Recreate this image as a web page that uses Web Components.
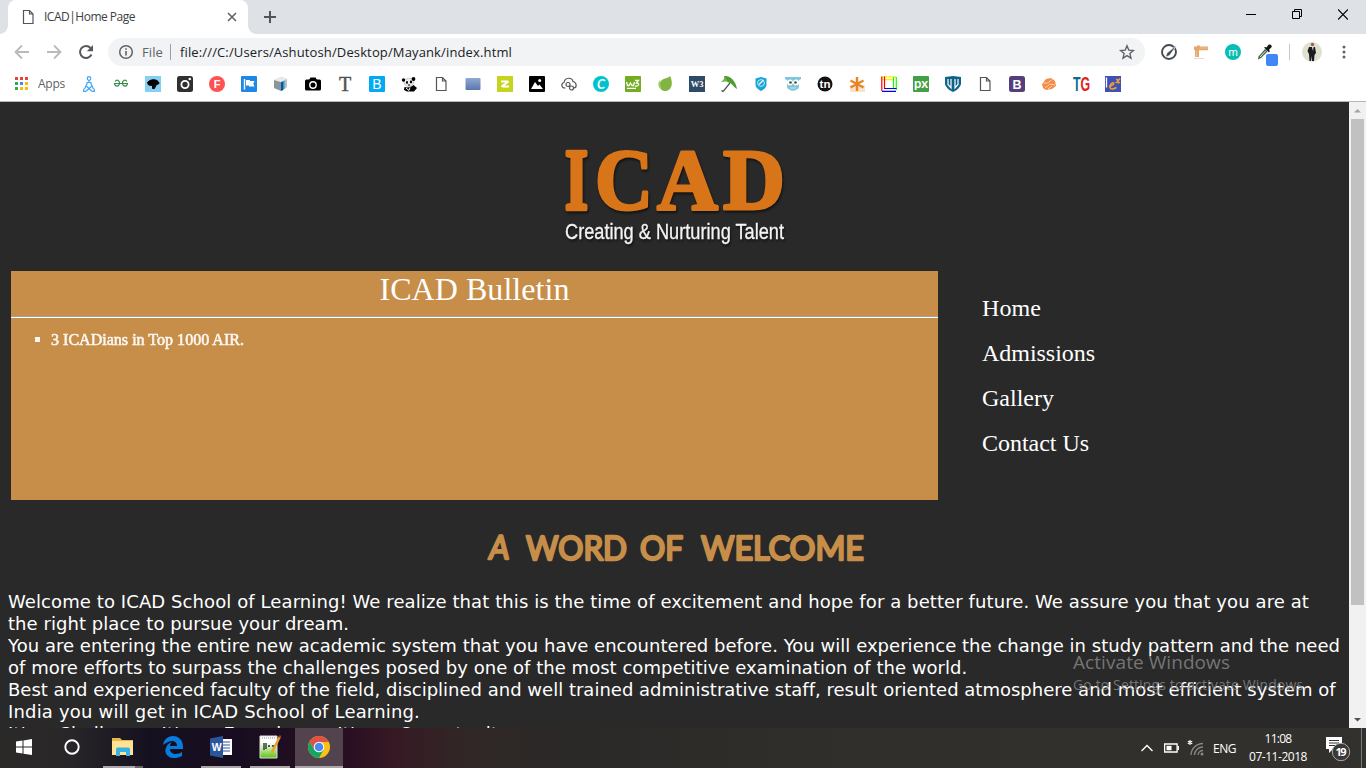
<!DOCTYPE html>
<html lang="en">
<head>
<meta charset="utf-8">
<title>ICAD|Home Page</title>
<style>
html,body{margin:0;height:100%;overflow:hidden}
</style>
</head>
<body>
<desktop-screen></desktop-screen>
<script>
const define = (name, html, setup) => {
  const t = document.createElement('template');
  t.innerHTML = html;
  customElements.define(name, class extends HTMLElement {
    connectedCallback() {
      if (this.shadowRoot) return;
      this.attachShadow({ mode: 'open' }).append(t.content.cloneNode(true));
      if (setup) setup(this, this.shadowRoot);
    }
  });
};

/* One line of text whose tracking is set so that it fills the given width */
define('fit-line', `<style>
:host{display:block;white-space:nowrap}
span{display:inline-block;white-space:nowrap}
</style><span></span>`, (host, root) => {
  const s = root.querySelector('span');
  s.textContent = host.getAttribute('text');
  const w = +host.getAttribute('width');
  if (w) {
    const natural = s.getBoundingClientRect().width;
    s.style.letterSpacing = ((w - natural) / s.textContent.length) + 'px';
  }
});

const page = '<path d="M3.500 1.500h6l3.500 3.500v9.500h-9.500zM9.500 1.500v3.500h3.500" fill="none" stroke="#555" stroke-width="1.200"/>';
const glyphs = {
  page,
  person: '<circle cx="8" cy="2.500" r="1.800"/><path d="M8 4v2M5.500 6.500h5M6.500 6.500L3.500 13M9.500 6.500L12.500 13M4.500 9.500L11 15.300M11.500 9.500L5 15.300M5 15.300H2.700V12.700M11 15.300h2.300V12.700"/>',
  gfg: '<g fill="none" stroke="#2f8d46" stroke-width="1.200"><path d="M2 5.500C4 3 7 4.500 6.500 7.500 6 11 2 11 1.500 7.500H14.500C14 11 10 11 9.500 7.500 9 4.500 12 3 14 5.500"/></g>',
  bird: '<rect width="16" height="16" fill="#87cff0"/><path d="M2.500 6.500c1.500-2 5-3.500 8-2.500 2 .5 3.500 2 3.500 3.500l-3 1.500-1.500 3.500H7.500V9.500L3.500 9z" stroke="#000"/>',
  insta: '<rect width="16" height="16" rx="2.500" fill="#303030"/><circle cx="8" cy="8.500" r="3.600" fill="none" stroke="#fff" stroke-width="1.800"/><circle cx="12.800" cy="3" r="1.300" fill="#fff"/>',
  F: '<circle cx="8" cy="8" r="8" fill="#ff5252"/><text x="8" y="12" font-size="11" font-weight="700" fill="#fff" text-anchor="middle">F</text>',
  flag: '<rect width="16" height="16" rx="1" fill="#1e88e5"/><path d="M3.500 3v10.500" stroke="#fff" stroke-width="1.400"/><path d="M5 4h4v1h4.500l-1.200 2.700 1.200 2.800H8v-1H5z" fill="#fff"/>',
  box: '<path d="M1 4l7-3 6 2v8l-5 4-8-3z" fill="#b9c0c6"/><path d="M1 4l7 2v9l-7-3z" fill="#8d959c"/><path d="M8 6l2-.8V14l-2 1z" fill="#075893"/><path d="M10 5l1.500-.6v8L10 14z" fill="#2e95d3"/><path d="M1 4l7-3 6 2-6 3z" fill="#e7eaec"/>',
  camera: '<rect y="3.500" width="16" height="11" rx="1.500"/><path d="M4 4l1.500-2.500h5L12 4z"/><circle cx="8" cy="9" r="3.200" fill="none" stroke="#fff" stroke-width="1.400"/>',
  T: '<text x="8" y="14.500" font-size="20" text-anchor="middle" fill="#505050" stroke="#505050" stroke-width=".4" font-family="Liberation Serif,serif">T</text>',
  B: '<rect width="16" height="16" rx="1" fill="#03a9f4"/><text x="8" y="13" font-size="14" text-anchor="middle" fill="#fff">B</text>',
  panda: '<path d="M3 5c3-4 9-3.500 10 1 0 5-9 6-10 1z" fill="#eee" stroke="#999" stroke-width=".5"/><circle cx="2.500" cy="4" r="1.700"/><circle cx="12.500" cy="3" r="1.900"/><ellipse cx="6" cy="6.500" rx="1" ry="1.400"/><ellipse cx="10" cy="6" rx="1.200" ry="1.400"/><path d="M3.500 11c3 1 7 0 9-2l3.500 3-3 3.500H6L3 14zM7 8.500h2v1H7z"/><path d="M5 12l3 2.500 1-3" stroke="#fff" fill="none"/>',
  blue: '<defs><linearGradient id="b" x2="0" y2="1"><stop stop-color="#91a9d3"/><stop offset="1" stop-color="#5b76ac"/></linearGradient></defs><rect x=".5" y="2" width="15" height="12" rx="1" fill="url(#b)"/>',
  Z: '<rect width="16" height="16" fill="#c6d420"/><path d="M4 5.500h6.500q1 0 0 .8L5.500 9.700q-1 .8 0 .8H12" fill="none" stroke="#fff" stroke-width="1.800"/>',
  mount: '<rect width="16" height="16" rx="1"/><path d="M2 13l4-7 3 4 1.500-1.500L14 13z" fill="#fff"/><circle cx="10.700" cy="4.500" r="1.500" fill="#fff"/>',
  cloud: '<g fill="none" stroke="#555" stroke-width="1.200"><path d="M4.500 12H4C0 12 0 7 3 6.500 4 1 11 1 12 5.500c4 1 4 6 1 6.500"/><circle cx="7" cy="8.500" r="2"/><circle cx="10.500" cy="12" r="2"/></g>',
  C: '<circle cx="8" cy="8" r="8" fill="#00c4cc"/><text x="8" y="12.500" font-size="13" font-style="italic" font-weight="700" text-anchor="middle" fill="#fff" font-family="Lato">C</text>',
  w3s: '<rect width="16" height="16" rx="1" fill="#73ad21"/><path d="M1.500 6l1 3.500h1.500L5.500 7 7 9.500h1.500L9.500 6M10 4.500h3.500l-2 2.500c3.500 0 2.500 4-1.500 3M2 12.300h9" fill="none" stroke="#fff" stroke-width="1.300"/>',
  leaf: '<path d="M13 0c-1 2-7 2-9 5-3 4-1 10 4 10 8 0 8-10 5-15z" fill="#80b541"/><path d="M2.500 12C0 8 2 5 3.500 4c-1 4 0 8 2 10.500z" fill="#a4cf63"/>',
  W3: '<rect width="16" height="16" fill="#2f4a68"/><text x="8" y="11" font-size="8.500" font-weight="700" text-anchor="middle" fill="#fff" font-family="Liberation Serif">W3</text>',
  umb: '<path d="M3 0C9-1 15 5 16 13 12.500 11 11 7 7.500 6.500 6 5 3 5 0 6 3 4 4 2 3 0z" fill="#4e9d30"/><path d="M3 0c1 3 0 5-3 6 3-1 5.500-1 7.500.5z" fill="#74b848"/><path d="M9 7l-6.500 8c-1 1-2 0-1.200-1" fill="none" stroke="#555" stroke-width="1.200"/>',
  shield: '<path d="M2.500 2.500L8 1l5.500 1.500v6c0 4-5.500 6.500-5.500 6.500s-5.500-2.500-5.500-6.500z" fill="#1aa3d5"/><circle cx="8" cy="7" r="3.400" fill="none" stroke="#b9e8fa"/><path d="M6 8.500L10.500 4" stroke="#dff6ff" stroke-width="1.500"/>',
  owl: '<path d="M0 1h16v2l-2 1v7c-2 5-10 5-12 0V4L0 3z" fill="#7fc5df"/><circle cx="5" cy="6.500" r="3" fill="#fff"/><circle cx="11" cy="6.500" r="3" fill="#fff"/><circle cx="5.500" cy="6.500" r="1.300" fill="#355"/><circle cx="10.500" cy="6.500" r="1.300" fill="#355"/><path d="M7 8h2l-1 2z" fill="#f2a33a"/><path d="M5 12h6" stroke="#bde8f5"/>',
  tn: '<circle cx="8" cy="8" r="7.500" fill="#111"/><text x="8" y="11.500" font-size="11.500" font-weight="700" text-anchor="middle" fill="#fff">tn</text>',
  star: '<rect x="1" y="9" width="15" height="7" fill="#fbe3ca"/><path d="M8 1v14M1.500 4.500l13 7M14.500 4.500l-13 7" stroke="#e78425" stroke-width="2.400"/>',
  frame: '<path d="M1 .8h14M1 3.700h11" stroke="#fe0" stroke-width="1.200"/><path d="M.8.5V15M3.500.5V13" stroke="red" stroke-width="1.200"/><path d="M12.500 1v12M15.300 1v13" stroke="#1f0" stroke-width="1.200"/><path d="M3.500 12.500h12M1 15.300h14" stroke="#00f" stroke-width="1.200"/>',
  px: '<rect width="16" height="16" rx="1" fill="#43a047"/><text x="8" y="11.500" font-size="13" font-weight="700" text-anchor="middle" fill="#fff" font-family="Lato">px</text>',
  ws: '<path d="M0 1l8-1 8 1v7c-1 5-8 8-8 8S1 13 0 8z" fill="#0d6487"/><path d="M3 3v5.500l3 3.500V3M13 3v5.500l-3 3.500V3" fill="none" stroke="#fff" stroke-width="1.200"/>',
  boot: '<rect width="16" height="16" rx="2.500" fill="#563d7c"/><text x="8" y="12.500" font-size="12.500" font-weight="700" text-anchor="middle" fill="#fff">B</text>',
  hands: '<path d="M1 8L5 3l5-1 4 3 1 5-4 3-6 1-3-2z" fill="#f58b45"/><path d="M1.500 7h5l4-3M4 12l5-4 5 1M7 13l4-3" fill="none" stroke="#ffd1b0" stroke-width="1"/>',
  TG: '<g transform="scale(.62 1)"><text x="0" y="15" font-weight="700" font-size="20"><tspan fill="#0e6a8c">T</tspan><tspan fill="#e2231a">G</tspan></text></g>',
  lex: '<rect width="16" height="16" fill="#3f51b5"/><path d="M1.500 1.500v10" stroke="#fff" stroke-width="1.300"/><path d="M4 10.500c7-2 5-5 2.500-3-3 3-2 8 5 4M11 3.500q2-.5 2 2t2 .5M15 2.500l-4 4.500" fill="none" stroke="#f5a02c" stroke-width="1.500"/>',
  back: '<path d="M15 8H2M8 1.500L1.500 8 8 14.500" fill="none" stroke="#b8babd" stroke-width="1.800"/>',
  forward: '<path d="M1 8h13M8 1.500L14.500 8 8 14.500" fill="none" stroke="#b8babd" stroke-width="1.800"/>',
  reload: '<path d="M13.500 10.500A6 6 0 1 1 12.500 4" fill="none" stroke="#55595e" stroke-width="2"/><path d="M15 1v6.200H8.800z" fill="#55595e"/>',
  info: '<circle cx="8" cy="8" r="6.300" fill="none" stroke="#5f6368" stroke-width="1.500"/><path d="M8 7v4.500M8 4.300v1.500" stroke="#5f6368" stroke-width="1.600"/>',
  fav: '<path d="M8 1.800l1.800 4.300 4.600.4-3.500 3.100 1.100 4.600L8 11.700l-4 2.500 1.100-4.600L1.600 6.500l4.600-.4z" fill="none" stroke="#5f6368" stroke-width="1.400"/>',
  edit: '<circle cx="8" cy="8" r="7" fill="none" stroke="#444b50" stroke-width="1.900"/><path d="M16 1L8.500 11.500l-4 1.500L6 9z" fill="#444b50" stroke="#fff" stroke-width=".6"/>',
  tcross: '<path d="M1 2.500h3v-1h3v1h8v3.800H6V13H2V6H1z" fill="#e5a56c"/><path d="M6.500 4h8M3.500 7v6" stroke="#f6c08a"/><path d="M1 14.500h10" stroke="#ddd"/>',
  m: '<circle cx="8" cy="8" r="8" fill="#08bdb4"/><text x="8" y="11.500" font-size="11.500" text-anchor="middle" fill="#fff">m</text>',
  drop: '<path d="M1 15.500l.5-3L8 5l2.500 2.500L4 14z" fill="#3f6848"/><path d="M3 13l5.500-6" stroke="#d6e9d8"/><path d="M7 3.500l5 5 .8-1.500-.8-1.200 2.500-2.500c1-2-1.500-3.500-3-2.500L9.500 3.500 8.500 3z" fill="#171717"/>'
};
define('ui-icon', `<style>:host{display:block;width:16px;height:16px;flex:none}svg{display:block;width:100%;height:100%;overflow:visible;font-family:"Liberation Sans",sans-serif}</style><svg viewBox="0 0 16 16"></svg>`, (host, root) => {
  const n = host.getAttribute('name'), s = root.querySelector('svg');
  s.innerHTML = glyphs[n];
  if (n === 'person') { s.setAttribute('fill', 'none'); s.setAttribute('stroke', '#42a5f5'); s.setAttribute('stroke-width', '1.2'); }
});

define('tab-strip', `<style>
:host{display:flex;height:34px;background:#dee1e6;align-items:stretch;font:12px "Open Sans",sans-serif;color:#3c4043;padding-left:8px;box-sizing:border-box}
.tab{width:240px;box-sizing:border-box;background:#fff;border-radius:8px 8px 0 0;display:flex;align-items:center;padding:0 10px 0 12px;position:relative}
.tab::before,.tab::after{content:"";position:absolute;bottom:0;width:8px;height:8px}
.tab::before{left:-8px;background:radial-gradient(circle at 0 0,#dee1e6 7.500px,#fff 8px)}
.tab::after{right:-8px;background:radial-gradient(circle at 100% 0,#dee1e6 7.500px,#fff 8px)}
.t{margin:-1px 0 0 8px;flex:1}
.x{width:12px;height:12px}
.plus{width:14px;margin:10px 0 0 15px;height:14px}
.win{margin-left:auto;display:flex;gap:36px;padding:9px 18px 0 0}
svg{display:block}
</style>
<div class="tab"><ui-icon name="page"></ui-icon><fit-line class="t" text="ICAD|Home Page" width="91"></fit-line>
<svg class="x" viewBox="0 0 12 12"><path d="M2 2l8 8M10 2l-8 8" stroke="#5f6368" stroke-width="1.600"/></svg></div>
<svg class="plus" viewBox="0 0 14 14"><path d="M7 1v12M1 7h12" stroke="#50555a" stroke-width="2"/></svg>
<div class="win"><svg width="10" height="11"><path d="M0 5.500h10" stroke="#000"/></svg><svg width="10" height="11"><path d="M.5 2.500h7v7h-7zM2.500 2.500v-2h7v7h-2" fill="none" stroke="#000"/></svg><svg width="10" height="11"><path d="M0 .5l10 10M10 .5l-10 10" stroke="#000" stroke-width="1.200"/></svg></div>`);

define('address-bar', `<style>
:host{display:flex;height:36px;background:#fff;align-items:center;font:13px "Open Sans",sans-serif;color:#202124;padding:0 13px 0 14px;box-sizing:border-box}
.nav{display:flex;gap:16px}
.omni{display:flex;align-items:center;height:28px;width:1037px;flex:none;border-radius:14px;background:#f1f3f4;margin-left:14px;padding:0 10px;box-sizing:border-box}
.file{color:#5f6368;margin-left:8px;width:28px}
.sep{width:1px;height:16px;background:#9aa0a6}
.url{margin-left:9px;flex:1}
.ext{display:flex;align-items:center;gap:16px;margin-left:16px}
.drop{position:relative}
.drop i{position:absolute;left:9px;top:10px;width:12px;height:12px;border-radius:2px;background:#4285f4}
.line{width:1px;height:16px;background:#c4c7ca}
.av{width:20px;height:20px;margin:0 -2px 0 -4px}
.ext>*{flex:none}
</style>
<div class="nav"><ui-icon name="back"></ui-icon><ui-icon name="forward"></ui-icon><ui-icon name="reload"></ui-icon></div>
<div class="omni"><ui-icon name="info"></ui-icon><fit-line class="file" text="File" width="21"></fit-line><span class="sep"></span><fit-line class="url" text="file:///C:/Users/Ashutosh/Desktop/Mayank/index.html" width="332"></fit-line><ui-icon name="fav"></ui-icon></div>
<div class="ext"><ui-icon name="edit"></ui-icon><ui-icon name="tcross"></ui-icon><ui-icon name="m"></ui-icon><span class="drop"><ui-icon name="drop"></ui-icon><i></i></span><span class="line"></span>
<svg class="av" viewBox="0 0 20 20"><circle cx="10" cy="10" r="10" fill="#dfe0cf"/><circle cx="10.500" cy="2.500" r="1.700" fill="#9b6243"/><path d="M7 5h6l1 6-1.500 2-.5 6h-2V14l-1 5H7.500L7 12l-1.500-3z" fill="#1a1b20"/><path d="M10 5h1.500l-.5 4z" fill="#fff"/></svg>
<svg width="16" height="16"><g fill="#5f6368"><circle cx="8" cy="3" r="1.500"/><circle cx="8" cy="8" r="1.500"/><circle cx="8" cy="13" r="1.500"/></g></svg></div>`);

define('bookmark-bar', `<style>
:host{display:flex;height:32px;background:#fff;align-items:center;border-bottom:1px solid #b5b6b9;box-sizing:border-box;padding:0 0 4px 15px;font:12px "Open Sans",sans-serif;color:#5f6368}
.apps{width:13px;height:13px;display:block}
.l{margin:0 0 0 10px;width:43px}
nav{display:flex;gap:16px}
</style><svg class="apps" viewBox="0 0 13 13"></svg><fit-line class="l" text="Apps" width="27"></fit-line><nav></nav>`, (h, root) => {
  const c = ['#ea4335','#ea4335','#ea4335','#34a853','#4285f4','#fbbc05','#34a853','#fbbc05','#fbbc05'];
  root.querySelector('svg').innerHTML = c.map((f, i) => `<rect x="${i % 3 * 5}" y="${(i / 3 | 0) * 5}" width="3" height="3" fill="${f}"/>`).join('');
  root.querySelector('nav').innerHTML = 'person gfg bird insta F flag box camera T B panda page blue Z mount cloud C w3s leaf W3 umb shield owl tn star frame px ws page boot hands TG lex'.split(' ').map(n => `<ui-icon name="${n}"></ui-icon>`).join('');
});

define('icad-logo', `<style>:host{display:block}svg{display:block;margin:0 auto;overflow:visible;filter:drop-shadow(1px 2px 1px #0008)}</style>
<svg width="250" height="120" viewBox="0 0 250 120">
<g font-family="Liberation Serif,serif" font-weight="700" font-size="87" fill="#d97519" stroke="#d97519" stroke-linejoin="round">
<text x="15" y="73.500" textLength="23" lengthAdjust="spacingAndGlyphs" stroke-width="4.500">I</text><text x="45" y="73.500" textLength="58" lengthAdjust="spacingAndGlyphs" stroke-width="3">C</text><text x="107" y="73.500" textLength="61" lengthAdjust="spacingAndGlyphs" stroke-width="3">A</text><text x="173" y="73.500" textLength="62" lengthAdjust="spacingAndGlyphs" stroke-width="3">D</text></g>
<text x="15" y="104" font-family="Liberation Sans,sans-serif" font-size="21.500" fill="#f4f4f4" stroke="#f4f4f4" stroke-width=".3" textLength="219" lengthAdjust="spacingAndGlyphs">Creating &amp; Nurturing Talent</text></svg>`);

define('icad-bulletin', `<style>
:host{display:block;width:927px;height:229px;background:#c68e49;color:#fff;font-family:"Liberation Serif",serif}
h1{margin:0;height:45px;font-size:32px;font-weight:400;line-height:36px;display:flex;justify-content:center}
.r{height:1px;background:#fff;border-top:1px solid #a9a199}
ul{margin:12px 0 0;padding:0 0 0 24px;list-style:none;font-size:16px;line-height:19px}
li{display:flex;align-items:center;gap:11px;opacity:.92}
li fit-line{-webkit-text-stroke:.6px #fff}
i{width:5px;height:5px;background:#fff}
</style><h1><fit-line text="ICAD Bulletin" width="190"></fit-line></h1><div class="r"></div><ul><li><i></i><fit-line text="3 ICADians in Top 1000 AIR." width="193"></fit-line></li></ul>`);

define('site-nav', `<style>
:host{display:grid;grid-auto-rows:45px;align-items:center;margin:15px 0 0 44px;align-self:start;font:24px "Liberation Serif",serif;color:#fff}
</style><fit-line text="Home" width="59"></fit-line><fit-line text="Admissions" width="113"></fit-line><fit-line text="Gallery" width="72"></fit-line><fit-line text="Contact Us" width="107"></fit-line>`);

define('welcome-text', `<style>
:host{display:block;font:18px/22px "DejaVu Sans",sans-serif;color:#fff}
svg{display:block;overflow:visible;margin:0 auto}
.p{padding:18px 0 0 8px}
</style><svg width="390" height="50" viewBox="0 0 390 50"><g font-family="Lato,sans-serif" font-weight="400" font-size="33" fill="#c68e49" stroke="#c68e49" stroke-width="2.400" stroke-linejoin="round">
<text y="36.500" transform="translate(4 0) skewX(-6)" x="8" textLength="20" lengthAdjust="spacingAndGlyphs">A</text>
<text x="46" y="36.500" textLength="101" lengthAdjust="spacingAndGlyphs">WORD</text><text x="160" y="36.500" textLength="43" lengthAdjust="spacingAndGlyphs">OF</text><text x="221" y="36.500" textLength="163" lengthAdjust="spacingAndGlyphs">WELCOME</text></g></svg>
<div class="p">
<fit-line text="Welcome to ICAD School of Learning! We realize that this is the time of excitement and hope for a better future. We assure you that you are at" width="1301"></fit-line>
<fit-line text="the right place to pursue your dream." width="341"></fit-line>
<fit-line text="You are entering the entire new academic system that you have encountered before. You will experience the change in study pattern and the need" width="1332"></fit-line>
<fit-line text="of more efforts to surpass the challenges posed by one of the most competitive examination of the world." width="959"></fit-line>
<fit-line text="Best and experienced faculty of the field, disciplined and well trained administrative staff, result oriented atmosphere and most efficient system of" width="1327"></fit-line>
<fit-line text="India you will get in ICAD School of Learning." width="412"></fit-line>
<fit-line text="It's a Challenge, It's an Experience, It's an Opportunity" width="501"></fit-line></div>`);

define('scroll-bar', `<style>
:host{display:flex;flex-direction:column;align-items:center;width:17px;background:#f1f1f1}
svg{flex:none;display:block}.t{width:13px;height:486px;background:#c1c1c1}.s{flex:1}
</style><svg width="17" height="17"><path d="M5 10.500h7L8.500 7z" fill="#a3a3a3"/></svg><div class="t"></div><div class="s"></div><svg width="17" height="17"><path d="M5 7h7l-3.500 3.500z" fill="#505050"/></svg>`);

define('task-bar', `<style>
:host{display:flex;height:40px;background:linear-gradient(90deg,#2b2928 0,#292629 70px,#151020 150px,#180d20 240px,#290f22 350px,#361824 390px,#312826 470px,#2b2928 560px,#302e2a 800px,#33312e);font:12px "Open Sans",sans-serif;color:#fff;align-items:stretch}
svg{display:block}
.b{height:40px;display:grid;place-items:center;box-sizing:border-box;border-bottom:2px solid transparent}
.on{border-color:#aaa6a8}
.tray{display:flex;align-items:center;margin-left:auto}
.clock{display:grid;justify-items:center;line-height:18px;margin-left:12px;width:60px}
.note{margin:2px 10px 0 17px}
.edge{width:1px;background:#777;margin-right:4px}
</style>
<div class="b" style="width:48px"><svg width="16" height="16"><path d="M0 2.500L6.500 1.500v6H0zM7.500 1.400L16 0v7.500H7.500zM0 8.500h6.500v6L0 13.500zM7.500 8.500H16V16l-8.500-1.300z" fill="#fff"/></svg></div>
<div class="b" style="width:48px"><svg width="18" height="18"><circle cx="9" cy="9" r="6.700" fill="none" stroke="#fff" stroke-width="1.900"/></svg></div>
<div class="b" style="width:40px;margin-left:7px;border-image:linear-gradient(90deg,#aaa6a8 78%,#666 78%) 2"><svg width="22" height="20"><path d="M0 1h8l2 2h11v15H0z" fill="#e9b64b"/><path d="M0 4h21v14H0z" fill="#ffe394"/><path d="M4 19v-7q0-1.500 1.500-1.500h11Q18 10.500 18 12v7h-4v-4H8v4z" fill="#38b1e5"/></svg></div>
<div class="b" style="width:48px;margin-left:6px"><svg width="22" height="22"><path d="M1 9C3-3 20-3 21 10v3H8c0 6 8 6 12 3v4C9 26 1 18 4 12c1-4 4-5 6-6-1 1-2 2-2 4h7c0-5-5-6-9-4-2 1-4 2-5 3z" fill="#087bdb"/></svg></div>
<div class="b on" style="width:40px;margin-left:4px"><svg width="22" height="22"><path d="M11 3h11v16H11z" fill="#fff"/><path d="M13 6h7M13 9h7M13 12h7M13 15h7" stroke="#2b579a"/><path d="M0 2.500L13 0v22L0 19.500z" fill="#2b579a"/><text x="1.700" y="15" font-family="Liberation Sans" font-weight="700" font-size="10.500" fill="#fff">W</text></svg></div>
<div class="b on" style="width:40px;margin-left:9px"><svg width="24" height="24"><defs><linearGradient id="g" x2="0" y2="1"><stop offset=".3" stop-color="#fff"/><stop offset="1" stop-color="#5cc411"/></linearGradient></defs><path d="M2 1h17v22H2z" fill="url(#g)" stroke="#ddd"/><path d="M4 3h14" stroke="#888" stroke-dasharray="1 1"/><path d="M6 8v7M8 8v6M10 11h2M14 11h2" stroke="#222" stroke-width="1.300"/><path d="M21 1l2 1-8 16-2 1v-3z" fill="#e5a72e"/><path d="M20.500 2l2 1 1-2-2-1z" fill="#b82525"/></svg></div>
<div class="b on" style="width:48px;margin-left:5px;background:#52434e"><svg width="24" height="24" viewBox="-12 -12 24 24"><circle r="11" fill="#fbc116"/><path d="M-9.500-5.500A11 11 0 0 1 9.500-5.500L10-5H0L-5 2z" fill="#de5145"/><path d="M-9.500-5.500A11 11 0 0 0 0 11L4.500 3-4.500 3z" fill="#1aa261"/><circle r="5.300" fill="#fff"/><circle r="4.300" fill="#4a8af4"/></svg></div>
<div class="tray">
<svg width="12" height="8"><path d="M.5 7L6 1.500 11.500 7" fill="none" stroke="#fff" stroke-width="1.400"/></svg>
<svg width="16" height="10" style="margin-left:11px"><path d="M.6 1h12.500v8H.6z" fill="none" stroke="#fff" stroke-width="1.300"/><path d="M2.500 2.800h5v4.500h-5z" fill="#fff"/><path d="M14.200 3v4" stroke="#fff" stroke-width="1.500"/></svg>
<svg width="17" height="18" style="margin-left:7px"><g fill="none" stroke="#8b8986" stroke-width="1.300"><path d="M4 16A12 12 0 0 1 16 4.500M7.500 16A8.500 8.500 0 0 1 16 8M11 16a5 5 0 0 1 5-4.500"/></g><circle cx="15" cy="15" r="1.500" fill="#8b8986"/><path d="M3 1v5M.8 2.200L5.200 4.800M5.200 2.200L.8 4.800" stroke="#fff" stroke-width="1.100"/></svg>
<fit-line style="margin-left:9px" text="ENG" width="23"></fit-line>
<div class="clock"><fit-line text="11:08" width="27"></fit-line><fit-line text="07-11-2018" width="58"></fit-line></div>
<svg class="note" width="26" height="26"><path d="M1 1h16v12H8l-4 4v-4H1z" fill="#fff"/><path d="M4 4.500h10M4 7h10M4 9.500h7" stroke="#333"/><circle cx="16" cy="16" r="8.700" fill="#3b3936" stroke="#aaa"/><text x="10.500" y="20" font-size="11" font-weight="700" fill="#fff" textLength="11">19</text></svg>
<div class="edge" style="height:40px"></div></div>`);

define('desktop-screen', `<style>
:host{display:grid;grid-template-rows:34px 36px 32px minmax(0,1fr) 40px;width:1366px;height:768px;overflow:hidden}
main{display:flex;background:#292929;min-height:0;overflow:hidden;position:relative}
.doc{flex:1;min-width:0;overflow:hidden}
icad-logo{padding:33px 0 16px}
.row{display:flex;padding-left:11px}
welcome-text{padding-top:23px}
.wm{position:absolute;left:1073px;top:548px;color:#8a8a8acc;font:19px/24px "Open Sans",sans-serif}
.wm .s{font-size:14px;line-height:20px;margin-top:1px}
</style><tab-strip></tab-strip><address-bar></address-bar><bookmark-bar></bookmark-bar>
<main><div class="doc"><icad-logo></icad-logo><div class="row"><icad-bulletin></icad-bulletin><site-nav></site-nav></div><welcome-text></welcome-text></div><scroll-bar></scroll-bar>
<div class="wm"><fit-line text="Activate Windows" width="157"></fit-line><fit-line class="s" text="Go to Settings to activate Windows." width="234"></fit-line></div></main><task-bar></task-bar>`);
</script>
</body>
</html>
